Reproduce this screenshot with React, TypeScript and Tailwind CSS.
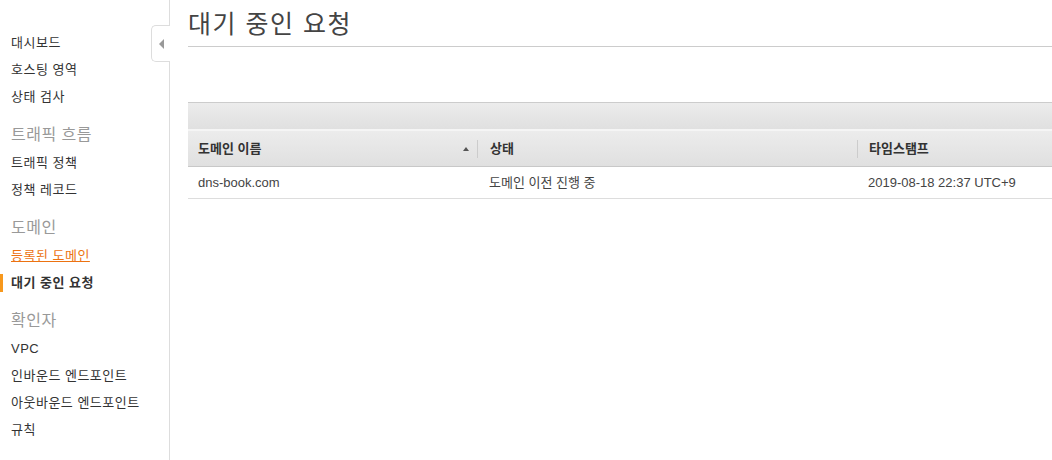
const font = { fontFamily: '"Liberation Sans", "Noto Sans CJK KR", sans-serif' }

type NavItem = { label: string; kind?: 'header' | 'link' | 'active' }

const nav: NavItem[][] = [
  [{ label: '대시보드' }, { label: '호스팅 영역' }, { label: '상태 검사' }],
  [{ label: '트래픽 흐름', kind: 'header' }, { label: '트래픽 정책' }, { label: '정책 레코드' }],
  [
    { label: '도메인', kind: 'header' },
    { label: '등록된 도메인', kind: 'link' },
    { label: '대기 중인 요청', kind: 'active' },
  ],
  [
    { label: '확인자', kind: 'header' },
    { label: 'VPC' },
    { label: '인바운드 엔드포인트' },
    { label: '아웃바운드 엔드포인트' },
    { label: '규칙' },
  ],
]

function Sidebar() {
  return (
    <aside className="relative w-[170px] shrink-0 border-r border-[#dddddd] pt-[29px] tracking-[0.5px]">
      {/* collapse tab */}
      <div className="absolute top-[25px] -right-px flex h-[37px] w-[19px] items-center justify-center rounded-l-[5px] border border-r-0 border-[#dddddd] bg-white">
        <span className="block h-0 w-0 border-y-[5px] border-r-[5px] border-y-transparent border-r-[#999999]" />
      </div>
      {nav.map((group, gi) => (
        <div key={gi} className={gi > 0 ? 'mt-[11px]' : ''}>
          {group.map((item) => {
            if (item.kind === 'header')
              return (
                <div key={item.label} className="h-[28px] pl-[11px] text-[16px] leading-[28px] text-[#999999]">
                  {item.label}
                </div>
              )
            if (item.kind === 'link')
              return (
                <div key={item.label} className="h-[27px] pl-[11px] text-[13px] leading-[28px] text-[#ec7211] underline">
                  {item.label}
                </div>
              )
            if (item.kind === 'active')
              return (
                <div key={item.label} className="relative h-[27px] pl-[11px] text-[13px] leading-[28px] font-bold text-[#333333]">
                  <span className="absolute top-[5px] left-0 h-[18px] w-[3px] bg-[#f7981d]" />
                  {item.label}
                </div>
              )
            return (
              <div key={item.label} className="h-[27px] pl-[11px] text-[13px] leading-[28px] text-[#333333]">
                {item.label}
              </div>
            )
          })}
        </div>
      ))}
    </aside>
  )
}

function Sep() {
  return <span className="h-[18px] w-px bg-[#cccccc]" />
}

export default function App() {
  return (
    <div className="flex h-[460px] w-[1052px] overflow-hidden bg-white" style={font}>
      <Sidebar />
      <main className="flex-1 pl-[18px]">
        <h1 className="h-[47px] border-b border-[#cccccc] pt-[6px] text-[25px] leading-[36px] tracking-[1.5px] text-[#444444]">
          대기 중인 요청
        </h1>

        <div className="mt-[55px]">
          {/* toolbar */}
          <div className="h-[27px] border-t border-[#cccccc] bg-gradient-to-b from-[#ececec] to-[#e0e0e0]" />
          {/* header */}
          <div className="flex h-[38px] items-center border-t-2 border-b border-t-[#f5f5f5] border-b-[#c8c8c8] bg-gradient-to-b from-[#ececec] to-[#e0e0e0] text-[13px] font-bold text-[#333333]">
            <div className="flex w-[290px] items-center pl-[10px]">
              <span className="flex-1">도메인 이름</span>
              <span className="mr-[8px] block h-0 w-0 border-x-[3px] border-b-[4px] border-x-transparent border-b-[#555555]" />
              <Sep />
            </div>
            <div className="flex w-[380px] items-center pl-[12px]">
              <span className="flex-1">상태</span>
              <Sep />
            </div>
            <div className="flex-1 pl-[11px]">타임스탬프</div>
          </div>
          {/* row */}
          <div className="flex h-[32px] items-center border-b border-[#dddddd] text-[13px] text-[#444444]">
            <div className="w-[290px] pl-[10px]">dns-book.com</div>
            <div className="w-[380px] pl-[11px]">도메인 이전 진행 중</div>
            <div className="flex-1 pl-[10px]">2019-08-18 22:37 UTC+9</div>
          </div>
        </div>
      </main>
    </div>
  )
}
